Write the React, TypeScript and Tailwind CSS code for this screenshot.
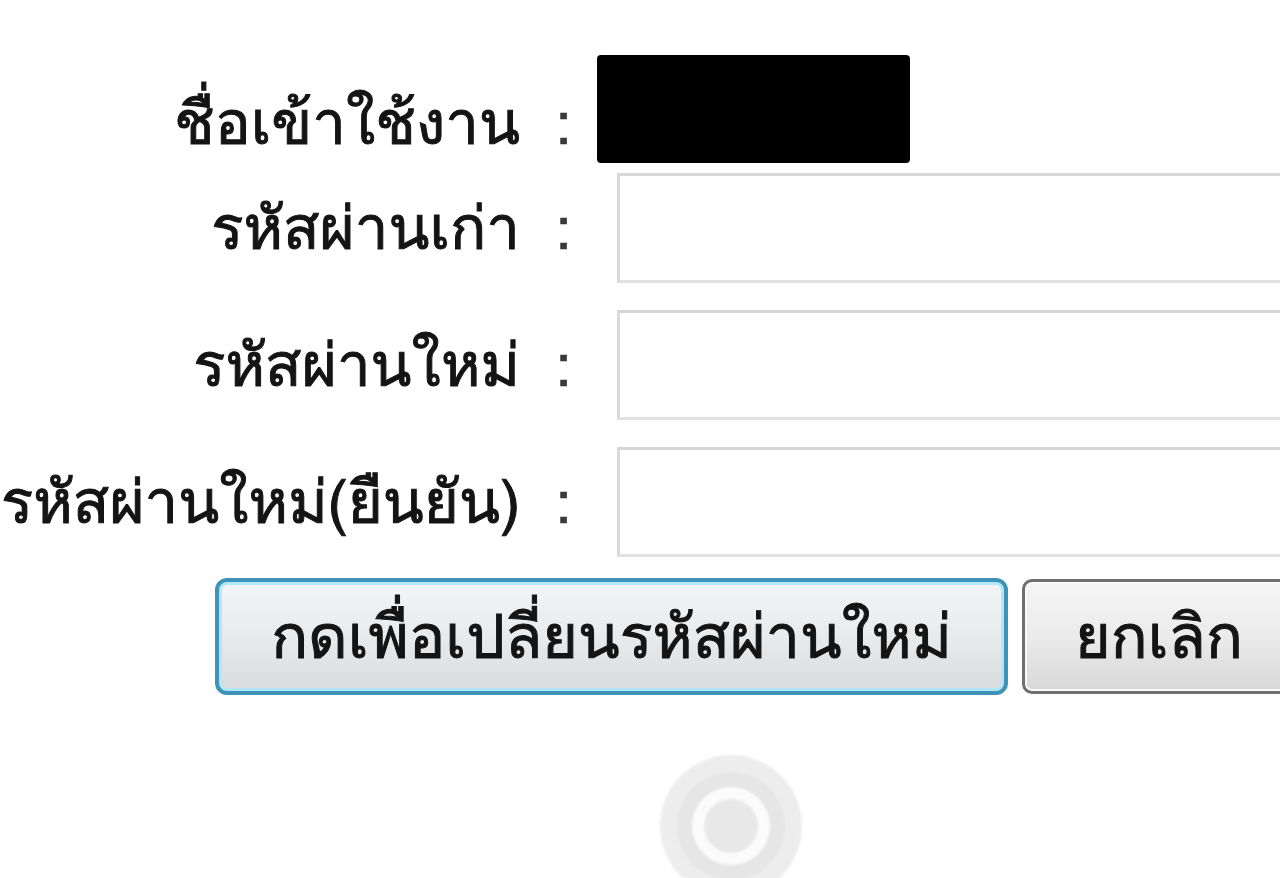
import React from "react";

function Label({ children, className = "" }: { children: React.ReactNode; className?: string }) {
  return (
    <div className={"flex items-center shrink-0 " + className}>
      <div className="w-[520px] text-right whitespace-nowrap text-[#141414] [-webkit-text-stroke:1px_#141414]">{children}</div>
      <div className="w-[77px] flex justify-center text-[#3a3a3a] [-webkit-text-stroke:0.6px_#3a3a3a] pl-[10px]">:</div>
    </div>
  );
}

function Field() {
  return (
    <input
      type="password"
      className="ml-[20px] w-[700px] h-[110px] shrink-0 border-[3px] border-[#e2e2e2] border-t-[#d6d6d6] border-l-[#dadada] bg-white outline-none"
    />
  );
}

export default function App() {
  return (
    <div className="w-[1280px] h-[878px] bg-white overflow-hidden relative text-[60px] leading-none font-[Loma,'Noto_Sans_Thai_Looped',Tahoma,sans-serif]">
      <div className="flex items-center pt-[55px]">
        <Label className="pt-[28px]">ชื่อเข้าใช้งาน</Label>
        <div className="w-[313px] h-[108px] bg-black rounded-[4px] shrink-0" />
      </div>

      <div className="flex items-center mt-[10px]">
        <Label>รหัสผ่านเก่า</Label>
        <Field />
      </div>

      <div className="flex items-center mt-[27px]">
        <Label>รหัสผ่านใหม่</Label>
        <Field />
      </div>

      <div className="flex items-center mt-[27px]">
        <Label>รหัสผ่านใหม่(ยืนยัน)</Label>
        <Field />
      </div>

      <div className="flex items-center mt-[21px] pl-[215px] gap-[14px]">
        <button className="w-[793px] h-[117px] shrink-0 rounded-[12px] border-[4px] border-[#3d93b8] bg-gradient-to-b from-[#f4f5f6] via-[#e9eaeb] to-[#d8dbdd] shadow-[inset_0_0_0_3px_#b3e6f6] text-[#141414] [-webkit-text-stroke:1px_#141414] whitespace-nowrap font-[Loma,'Noto_Sans_Thai_Looped',Tahoma,sans-serif] text-[61px] leading-none">
          กดเพื่อเปลี่ยนรหัสผ่านใหม่
        </button>
        <button className="w-[300px] h-[115px] shrink-0 rounded-[10px] border-[3px] border-[#6f6f6f] bg-gradient-to-b from-[#f5f5f5] via-[#ebebeb] to-[#d8d8d8] shadow-[inset_0_0_0_2px_#fafafa] text-[#141414] [-webkit-text-stroke:1px_#141414] whitespace-nowrap text-left pl-[50px] font-[Loma,'Noto_Sans_Thai_Looped',Tahoma,sans-serif] text-[61px] leading-none">
          ยกเลิก
        </button>
      </div>

      <div className="absolute left-[660px] top-[755px] w-[142px] h-[142px] rounded-full bg-[#ededed] flex items-center justify-center blur-[1px]">
        <div className="w-[108px] h-[108px] rounded-full bg-[#e6e6e6] flex items-center justify-center">
          <div className="w-[78px] h-[78px] rounded-full bg-[#fbfbfb] flex items-center justify-center">
            <div className="w-[54px] h-[54px] rounded-full bg-[#e8e8e8]" />
          </div>
        </div>
      </div>
    </div>
  );
}
